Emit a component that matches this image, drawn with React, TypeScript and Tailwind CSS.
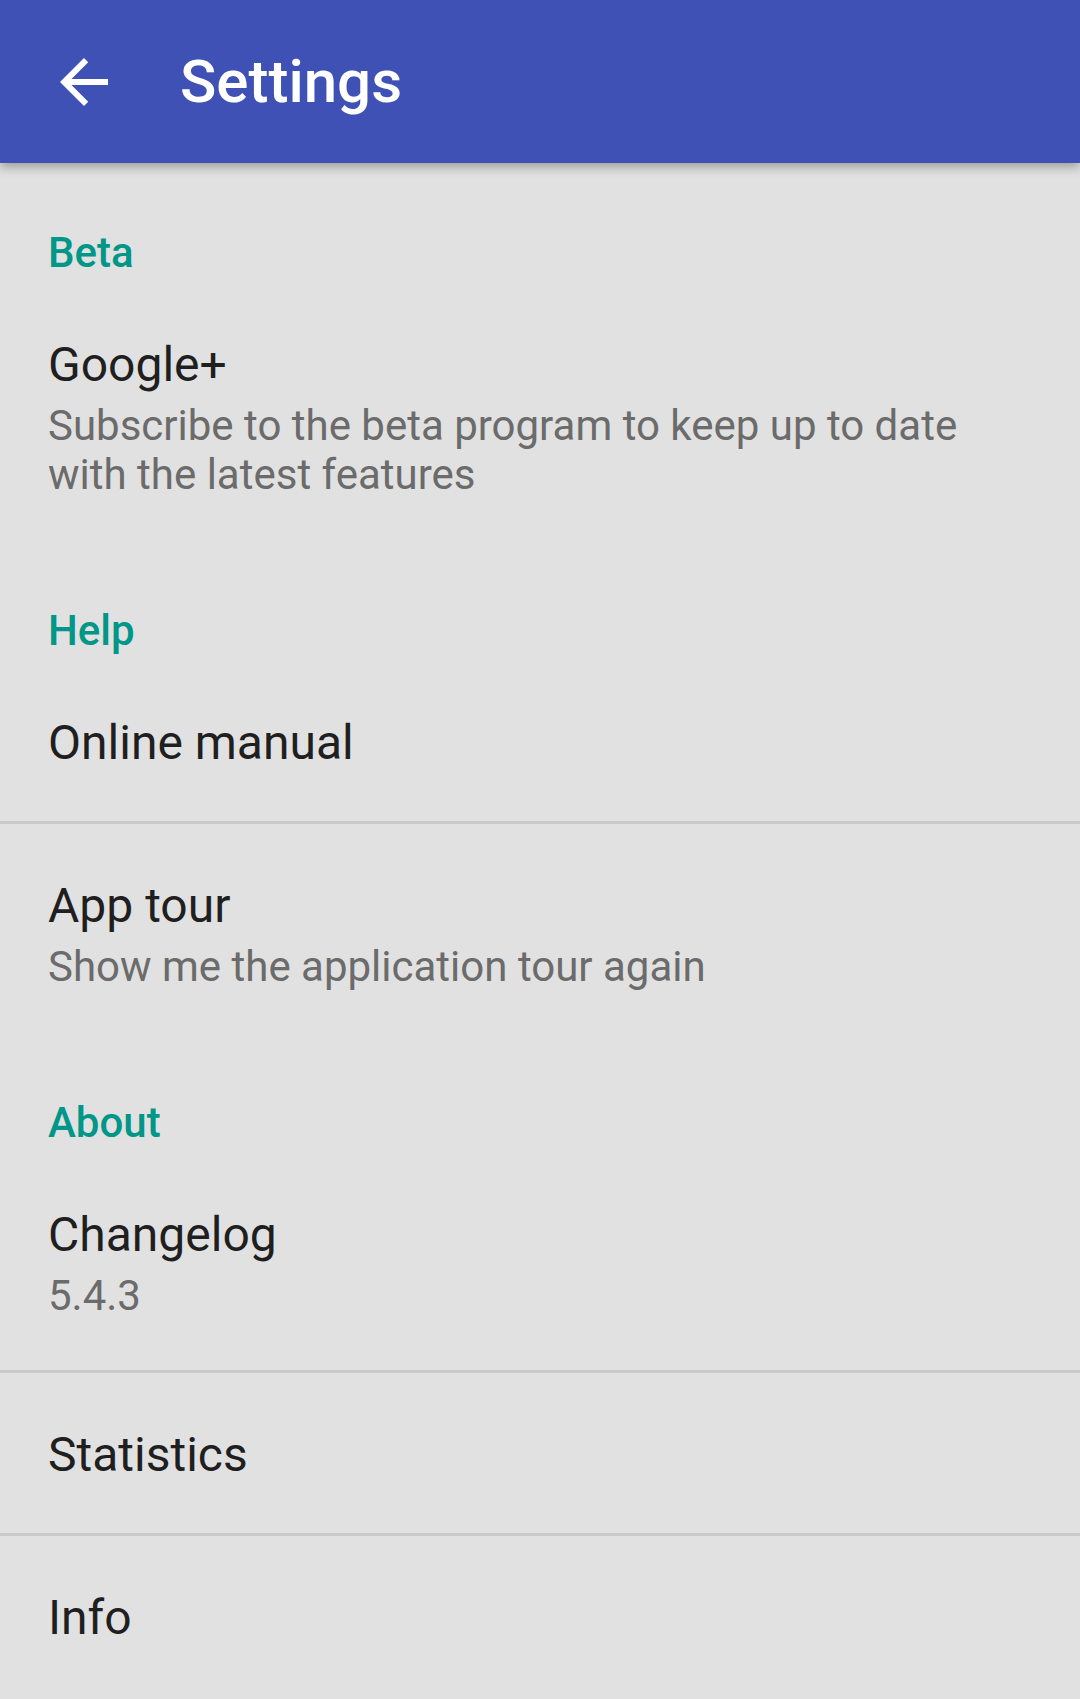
import React from "react";

const font = { fontFamily: "Roboto, 'Noto Sans', sans-serif" };

function Category({ label }: { label: string }) {
  return (
    <div className="pt-[58px] pb-[6px] pl-[48px]">
      <div className="text-[42px] leading-[48px] font-medium text-[#009688]">{label}</div>
    </div>
  );
}

function Item({ title, summary }: { title: string; summary?: React.ReactNode }) {
  return (
    <div className="pt-[54px] pb-[50px] pl-[48px] pr-[40px]">
      <div className="text-[48px] leading-[56px] text-[#1f1f1f]">{title}</div>
      {summary && (
        <div className="mt-[8px] text-[42px] leading-[49px] text-[#6b6b6b]">{summary}</div>
      )}
    </div>
  );
}

function Divider() {
  return <div className="h-[3px] bg-[#c9c9c9]" />;
}

export default function App() {
  return (
    <div className="w-[1080px] min-h-[1699px] bg-[#e1e1e1] overflow-hidden" style={font}>
      <header className="relative z-10 h-[163px] bg-[#3f51b5] flex items-center shadow-[0_4px_10px_rgba(0,0,0,0.3)]">
        <svg
          className="ml-[48px] w-[72px] h-[72px]"
          viewBox="0 0 24 24"
          fill="#ffffff"
        >
          <path d="M20 11H7.83l5.59-5.59L12 4l-8 8 8 8 1.41-1.41L7.83 13H20v-2z" />
        </svg>
        <div className="ml-[60px] text-[60px] font-medium text-white leading-none">Settings</div>
      </header>
      <main className="pt-[8px]">
        <Category label="Beta" />
        <Item
          title="Google+"
          summary={
            <>
              Subscribe to the beta program to keep up to date
              <br />
              with the latest features
            </>
          }
        />
        <Category label="Help" />
        <Item title="Online manual" />
        <Divider />
        <Item title="App tour" summary="Show me the application tour again" />
        <Category label="About" />
        <Item title="Changelog" summary="5.4.3" />
        <Divider />
        <Item title="Statistics" />
        <Divider />
        <Item title="Info" />
      </main>
    </div>
  );
}
